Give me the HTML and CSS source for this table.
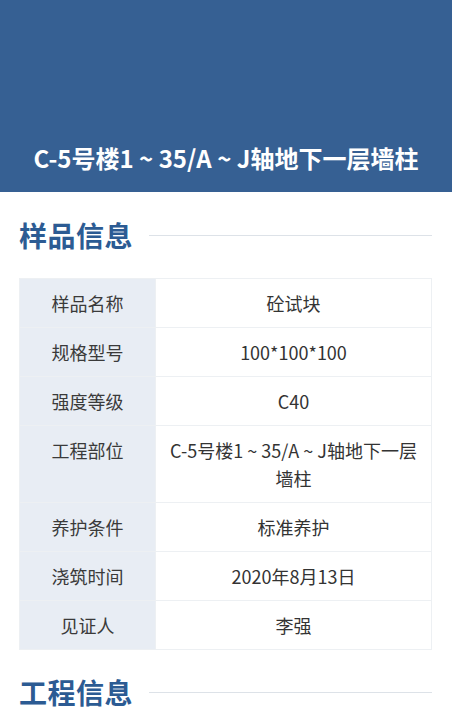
FILE: index.html
```html
<!DOCTYPE html>
<html lang="zh">
<head>
<meta charset="utf-8">
<link rel="stylesheet" href="styles.css">
</head>
<body>
<header class="banner">
  <h1 class="banner-title">C-5号楼1 ~ 35/A ~ J轴地下一层墙柱</h1>
</header>
<main class="content">
  <section class="section">
    <h2 class="section-title"><span>样品信息</span><i class="rule"></i></h2>
    <table class="info">
      <tr><th>样品名称</th><td>砼试块</td></tr>
      <tr><th>规格型号</th><td>100*100*100</td></tr>
      <tr><th>强度等级</th><td>C40</td></tr>
      <tr><th>工程部位</th><td>C-5号楼1 ~ 35/A ~ J轴地下一层墙柱</td></tr>
      <tr><th>养护条件</th><td>标准养护</td></tr>
      <tr><th>浇筑时间</th><td>2020年8月13日</td></tr>
      <tr><th>见证人</th><td>李强</td></tr>
    </table>
  </section>
  <section class="section">
    <h2 class="section-title"><span>工程信息</span><i class="rule"></i></h2>
  </section>
</main>
</body>
</html>
```
FILE: styles.css
```css
* { box-sizing: border-box; }
html, body { margin: 0; padding: 0; background: #fff; }
body {
  font-family: "Noto Sans CJK SC", "Noto Sans", sans-serif;
  color: #333;
}
.banner {
  height: 192px;
  background: #366093;
  display: flex;
  align-items: flex-end;
  justify-content: center;
  padding-bottom: 18px;
}
.banner-title {
  margin: 0;
  color: #fff;
  font-size: 24px;
  font-weight: 700;
  line-height: 32px;
  white-space: nowrap;
}
.content { padding: 0 20px 0 19px; }
.section-title {
  display: flex;
  align-items: center;
  margin: 0;
  height: 84px;
  font-size: 28px;
  font-weight: 700;
  color: #2c5b93;
  letter-spacing: 0.5px;
}
.section-title .rule {
  flex: 1;
  height: 1px;
  background: #dde2e8;
  margin-left: 16px;
}
.section:first-child .section-title { height: 86px; }
.info {
  width: 100%;
  border-collapse: collapse;
  font-size: 18px;
  line-height: 28px;
}
.info th, .info td {
  border: 1px solid #edf0f3;
  padding: 10px 11px;
  text-align: center;
  vertical-align: top;
  font-weight: 400;
  color: #333;
}
.info th {
  width: 136px;
  background: #e8edf4;
  color: #3a3a3a;
}
```
